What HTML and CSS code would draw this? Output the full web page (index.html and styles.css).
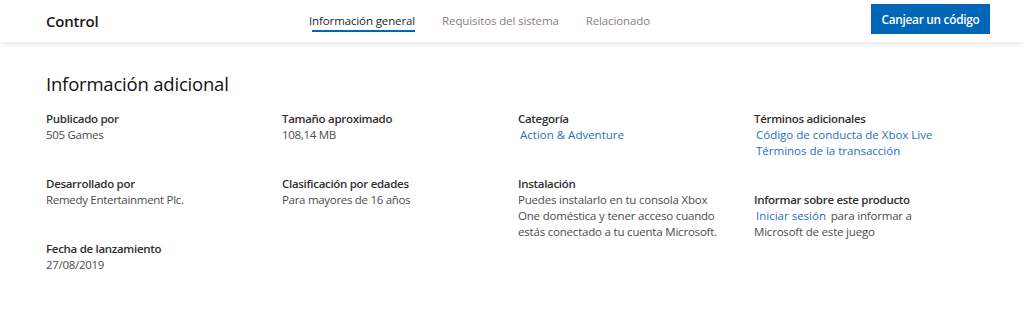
FILE: index.html
```html
<!DOCTYPE html>
<html lang="es">
<head>
<meta charset="utf-8">
<title>Control</title>
<link rel="stylesheet" href="styles.css">
</head>
<body>
<header class="topbar">
  <div class="topbar-inner">
    <div class="brand">Control</div>
    <nav class="tabs">
      <a class="tab active">Información general</a>
      <a class="tab">Requisitos del sistema</a>
      <a class="tab">Relacionado</a>
    </nav>
    <a class="btn">Canjear un código</a>
  </div>
</header>
<main class="content">
  <h2 class="title">Información adicional</h2>
  <div class="cols">
    <div class="col">
      <div class="item"><div class="label">Publicado por</div><div class="val">505 Games</div></div>
      <div class="item"><div class="label">Desarrollado por</div><div class="val">Remedy Entertainment Plc.</div></div>
      <div class="item"><div class="label">Fecha de lanzamiento</div><div class="val">27/08/2019</div></div>
    </div>
    <div class="col">
      <div class="item"><div class="label">Tamaño aproximado</div><div class="val">108,14 MB</div></div>
      <div class="item"><div class="label">Clasificación por edades</div><div class="val">Para mayores de 16 años</div></div>
    </div>
    <div class="col">
      <div class="item"><div class="label">Categoría</div><div class="val"><a class="link">Action &amp; Adventure</a></div></div>
      <div class="item"><div class="label">Instalación</div><div class="val desc">Puedes instalarlo en tu consola Xbox<br>One doméstica y tener acceso cuando<br>estás conectado a tu cuenta Microsoft.</div></div>
    </div>
    <div class="col">
      <div class="item"><div class="label">Términos adicionales</div><div class="val"><a class="link">Código de conducta de Xbox Live</a><br><a class="link">Términos de la transacción</a></div></div>
      <div class="item"><div class="label">Informar sobre este producto</div><div class="val desc"><a class="link">Iniciar sesión</a> para informar a<br>Microsoft de este juego</div></div>
    </div>
  </div>
</main>
</body>
</html>
```

FILE: styles.css
```css
* { box-sizing: border-box; }
html, body { margin: 0; padding: 0; background: #fff; }
body { font-family: "Open Sans", "Noto Sans", sans-serif; color: #2f2f2f; }

.topbar {
  height: 42px;
  background: #fff;
  box-shadow: 0 2px 6px rgba(0,0,0,0.10);
  position: relative;
}
.topbar-inner {
  width: 944px;
  margin: 0 0 0 46px;
  height: 42px;
  display: flex;
  align-items: center;
}
.brand {
  font-size: 15px;
  font-weight: 600;
  color: #1a1a1a;
  letter-spacing: -0.2px;
  width: 263px;
}
.tabs {
  display: flex;
  gap: 27px;
  height: 42px;
  align-items: center;
}
.tab {
  font-size: 11.5px;
  color: #8a8178;
  letter-spacing: -0.12px;
  position: relative;
  line-height: 42px;
}
.tab.active { color: #262626; }
.tab.active::after {
  content: "";
  position: absolute;
  left: 3px; right: 0;
  bottom: 10px;
  height: 2px;
  background: #0067b8;
}
.btn {
  margin-left: auto;
  background: #0067b8;
  color: #fff;
  font-size: 11.8px;
  font-weight: 600;
  letter-spacing: -0.25px;
  height: 30px;
  width: 119px;
  display: flex;
  align-items: center;
  justify-content: center;
  margin-top: -4px;
}

.content {
  padding: 29px 0 0 46px;
  width: 990px;
}
.title {
  margin: 0 0 14px;
  font-size: 18.5px;
  font-weight: 500;
  color: #111;
  letter-spacing: -0.2px;
  line-height: 26px;
}
.cols {
  display: grid;
  grid-template-columns: repeat(4, 236px);
}
.item { margin-bottom: 33px; font-size: 11.5px; line-height: 16px; letter-spacing: -0.3px; }
.label { font-weight: 600; color: #2f2f2f; }
.val { color: #4c4c4c; }
.desc { white-space: nowrap; letter-spacing: -0.2px; }
.link { color: #1e6fc4; margin: 0 2px; letter-spacing: 0; }
```
